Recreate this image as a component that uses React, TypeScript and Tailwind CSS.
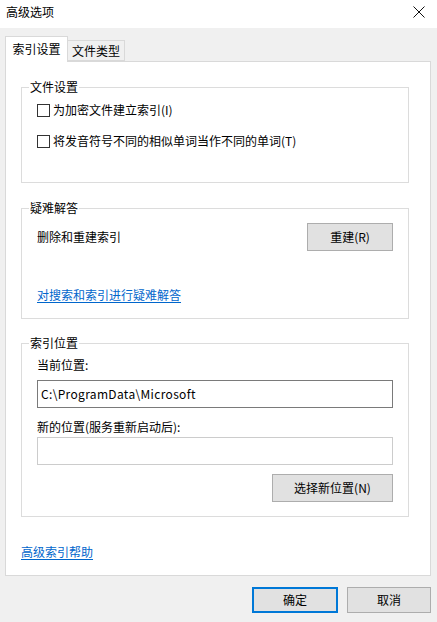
import React from "react";

const font = {
  fontFamily: '"Noto Sans CJK SC", "Noto Sans", sans-serif',
};

function Checkbox({ label }: { label: string }) {
  return (
    <div className="flex items-center h-[20px]">
      <div className="w-[13px] h-[13px] border border-[#333333] bg-white" />
      <span className="ml-[3px] leading-[16px]">{label}</span>
    </div>
  );
}

function Group({
  title,
  height,
  children,
  className = "",
}: {
  title: string;
  height: string;
  children: React.ReactNode;
  className?: string;
}) {
  return (
    <fieldset className={`border border-[#dcdcdc] px-0 m-0 ${height} ${className}`}>
      <legend className="ml-[7px] px-[1px] leading-[16px] h-[16px]">{title}</legend>
      <div className="px-[15px]">{children}</div>
    </fieldset>
  );
}

export default function App() {
  return (
    <div
      className="w-[437px] h-[622px] bg-[#f0f0f0] flex flex-col text-[12px] text-black overflow-hidden"
      style={font}
    >
      {/* Title bar */}
      <div className="h-[28px] bg-white flex items-center justify-between pl-[6px] pr-[6px] pb-[4px] shrink-0">
        <span className="leading-[16px]">高级选项</span>
        <svg width="12" height="12" viewBox="0 0 12 12" className="mr-[6px]">
          <path d="M0.5 0.5 L11.5 11.5 M11.5 0.5 L0.5 11.5" stroke="#111" strokeWidth="1" fill="none" />
        </svg>
      </div>

      {/* Tabs */}
      <div className="h-[33px] flex items-end pl-[5px] shrink-0 relative z-10">
        <div className="h-[26px] w-[63px] bg-white border border-b-0 border-[#d9d9d9] flex items-center justify-center mb-[-1px] pb-[1px]">
          <span className="leading-[16px]">索引设置</span>
        </div>
        <div className="h-[21px] w-[57px] bg-[#f0f0f0] border border-l-0 border-[#d9d9d9] flex items-center justify-center">
          <span className="leading-[16px]">文件类型</span>
        </div>
      </div>

      {/* Panel */}
      <div className="ml-[5px] mr-[6px] h-[515px] bg-white border border-[#d9d9d9] pt-[17px] pl-[15px] pr-[21px] shrink-0">
        <Group title="文件设置" height="h-[104px]">
          <div className="mt-[5px]">
            <Checkbox label="为加密文件建立索引(I)" />
          </div>
          <div className="mt-[11px]">
            <Checkbox label="将发音符号不同的相似单词当作不同的单词(T)" />
          </div>
        </Group>

        <Group title="疑难解答" height="h-[119px]" className="mt-[17px]">
          <div className="mt-[7px] flex items-center justify-between">
            <span className="leading-[16px]">删除和重建索引</span>
            <div className="w-[86px] h-[28px] bg-[#e1e1e1] border border-[#adadad] flex items-center justify-center">
              <span className="leading-[16px]">重建(R)</span>
            </div>
          </div>
          <div className="mt-[36px] leading-[16px]">
            <span className="text-[#0066cc] underline underline-offset-2">对搜索和索引进行疑难解答</span>
          </div>
        </Group>

        <Group title="索引位置" height="h-[182px]" className="mt-[16px]">
          <div className="mt-[6px] leading-[16px]">当前位置:</div>
          <div className="mt-[7px] h-[28px] border border-[#7a7a7a] flex items-center px-[3px]">
            <span className="leading-[16px] tracking-[0.33px]">C:\ProgramData\Microsoft</span>
          </div>
          <div className="mt-[11px] leading-[16px]">新的位置(服务重新启动后):</div>
          <div className="mt-[2px] h-[28px] border border-[#cccccc]" />
          <div className="mt-[9px] flex justify-end">
            <div className="w-[121px] h-[28px] bg-[#e1e1e1] border border-[#adadad] flex items-center justify-center">
              <span className="leading-[16px]">选择新位置(N)</span>
            </div>
          </div>
        </Group>

        <div className="mt-[27px] leading-[16px]">
          <span className="text-[#0066cc] underline underline-offset-2">高级索引帮助</span>
        </div>
      </div>

      {/* Bottom buttons */}
      <div className="flex justify-end mt-[11px] pr-[6px] gap-[9px]">
        <div className="w-[86px] h-[26px] bg-[#e1e1e1] border-2 border-[#0078d7] flex items-center justify-center">
          <span className="leading-[16px]">确定</span>
        </div>
        <div className="w-[84px] h-[26px] bg-[#e1e1e1] border border-[#adadad] flex items-center justify-center">
          <span className="leading-[16px]">取消</span>
        </div>
      </div>
    </div>
  );
}
